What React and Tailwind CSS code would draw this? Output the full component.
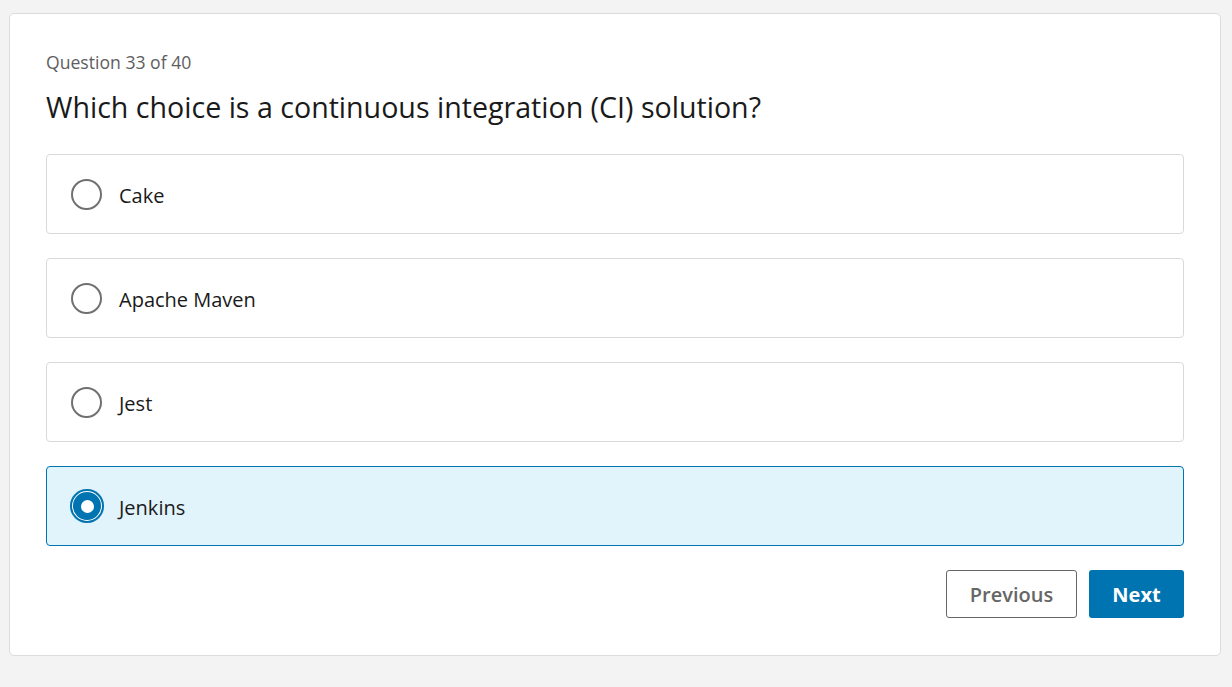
import React from "react";

const options = ["Cake", "Apache Maven", "Jest", "Jenkins"];

export default function App() {
  const selected = 3;
  return (
    <div className="min-h-[687px] bg-[#f3f3f3] pt-[13px] pl-[9px] pr-[11px] pb-[32px]" style={{ fontFamily: '"Open Sans", "Noto Sans", sans-serif' }}>
      <div className="rounded-[5px] border border-[#dcdcdc] bg-white px-[36px] pt-[36px] pb-[37px]">
        <div className="text-[17.6px] leading-[24px] text-[#5e5e5e]">Question 33 of 40</div>
        <h1 className="mt-[13px] text-[28.6px] leading-[40px] text-[#1a1a1a]">Which choice is a continuous integration (CI) solution?</h1>
        <div className="mt-[27px] flex flex-col gap-[24px]">
          {options.map((o, i) => {
            const sel = i === selected;
            return (
              <div
                key={o}
                className={
                  sel
                    ? "flex h-[80px] items-center rounded-[4px] border border-[#0073b1] bg-[#e1f3fb] pl-[23px]"
                    : "flex h-[80px] items-center rounded-[4px] border border-[#d9d9d9] bg-white pl-[23px]"
                }
              >
                {sel ? (
                  <div className="flex h-[34px] w-[34px] items-center justify-center rounded-full bg-[#0073b1] shadow-[inset_0_0_0_2px_#0073b1,inset_0_0_0_3px_#ffffff]">
                    <div className="h-[13px] w-[13px] rounded-full bg-white" />
                  </div>
                ) : (
                  <div className="ml-[1px] h-[31px] w-[31px] rounded-full border-2 border-[#707070] bg-white" />
                )}
                <span className={sel ? "ml-[15px] pt-[3px] text-[20px] text-[#1a1a1a]" : "ml-[17px] pt-[3px] text-[20px] text-[#1a1a1a]"}>{o}</span>
              </div>
            );
          })}
        </div>
        <div className="mt-[24px] flex justify-end gap-[12px]">
          <button className="h-[48px] w-[131px] rounded-[3px] border border-[#666666] bg-white pt-[2px] text-[20px] font-semibold text-[#666666]">Previous</button>
          <button className="h-[48px] w-[95px] rounded-[3px] bg-[#0073b1] pt-[2px] text-[20px] font-bold text-white">Next</button>
        </div>
      </div>
    </div>
  );
}
